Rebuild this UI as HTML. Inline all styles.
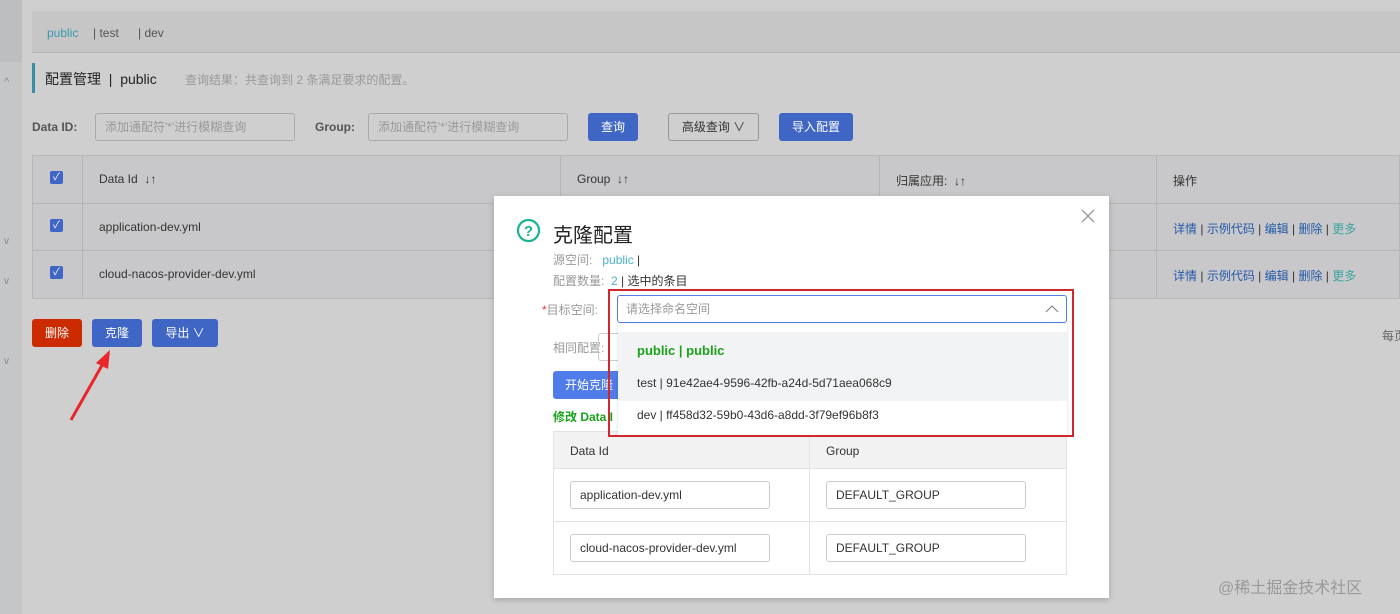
<!DOCTYPE html>
<html><head><meta charset="utf-8"><style>
*{box-sizing:border-box;margin:0;padding:0}
body{width:1400px;height:614px;overflow:hidden;background:#cfcfcf;font-family:"Liberation Sans","Noto Sans CJK SC",sans-serif;font-size:12px;color:#333;position:relative}
.a{position:absolute;white-space:nowrap}
.cb{position:absolute;width:13px;height:13px;background:#3f66c5;border-radius:2px;color:#fff;font-size:10px;line-height:13px;text-align:center}
.inp{position:absolute;border:1px solid #aaa;border-radius:3px;height:28px;color:#999;padding-left:9px;line-height:26px;font-size:12px;white-space:nowrap}
.btn{position:absolute;border-radius:3px;color:#fff;text-align:center;line-height:28px;height:28px;font-size:12px;white-space:nowrap}
.lk{color:#2359a8}
</style></head><body>
<div class="a" style="left:0;top:0;width:22px;height:614px;background:#c5c6c8"></div>
<div class="a" style="left:0;top:0;width:22px;height:62px;background:#bdbec0"></div>
<div class="a" style="left:4px;top:76px;color:#888;font-size:11px">^</div>
<div class="a" style="left:4px;top:236px;color:#888;font-size:10px">v</div>
<div class="a" style="left:4px;top:276px;color:#888;font-size:10px">v</div>
<div class="a" style="left:4px;top:356px;color:#888;font-size:10px">v</div>
<div class="a" style="left:32px;top:11px;width:1368px;height:42px;background:#c6c6c6;border-bottom:1px solid #b5b5b5"></div>
<div class="a" style="left:47px;top:26px;color:#3a9ab0">public</div>
<div class="a" style="left:93px;top:26px;color:#555">| test</div>
<div class="a" style="left:138px;top:26px;color:#555">| dev</div>
<div class="a" style="left:32px;top:63px;width:3px;height:30px;background:#3a8fa8"></div>
<div class="a" style="left:45px;top:69px;font-size:14px;color:#222">配置管理 &nbsp;| &nbsp;public</div>
<div class="a" style="left:185px;top:71px;color:#999">查询结果：共查询到 2 条满足要求的配置。</div>
<div class="a" style="left:32px;top:120px;font-weight:bold;color:#555">Data ID:</div>
<div class="inp" style="left:95px;top:113px;width:200px">添加通配符'*'进行模糊查询</div>
<div class="a" style="left:315px;top:120px;font-weight:bold;color:#555">Group:</div>
<div class="inp" style="left:368px;top:113px;width:200px">添加通配符'*'进行模糊查询</div>
<div class="btn" style="left:588px;top:113px;width:50px;background:#3f66c5">查询</div>
<div class="btn" style="left:668px;top:113px;width:91px;border:1px solid #999;color:#333;line-height:26px">高级查询 ∨</div>
<div class="btn" style="left:779px;top:113px;width:74px;background:#3f66c5">导入配置</div>
<div class="a" style="left:32px;top:155px;width:1368px;height:144px;background:#c8c8ca;border:1px solid #b8b8b8"></div>
<div class="a" style="left:32px;top:203px;width:1368px;height:1px;background:#b5b5b5"></div>
<div class="a" style="left:32px;top:250px;width:1368px;height:1px;background:#b5b5b5"></div>
<div class="a" style="left:82px;top:155px;width:1px;height:144px;background:#b5b5b5"></div>
<div class="a" style="left:560px;top:155px;width:1px;height:48px;background:#b5b5b5"></div>
<div class="a" style="left:879px;top:155px;width:1px;height:48px;background:#b5b5b5"></div>
<div class="a" style="left:1156px;top:155px;width:1px;height:144px;background:#b5b5b5"></div>
<div class="cb" style="left:50px;top:171px">✓</div>
<div class="cb" style="left:50px;top:219px">✓</div>
<div class="cb" style="left:50px;top:266px">✓</div>
<div class="a" style="left:99px;top:172px">Data Id &nbsp;↓↑</div>
<div class="a" style="left:577px;top:172px">Group &nbsp;↓↑</div>
<div class="a" style="left:896px;top:172px">归属应用: &nbsp;↓↑</div>
<div class="a" style="left:1173px;top:172px">操作</div>
<div class="a" style="left:99px;top:220px">application-dev.yml</div>
<div class="a" style="left:99px;top:267px">cloud-nacos-provider-dev.yml</div>
<div class="a" style="left:1173px;top:220px"><span class="lk">详情</span> | <span class="lk">示例代码</span> | <span class="lk">编辑</span> | <span class="lk">删除</span> | <span style="color:#3aa5a0">更多</span></div>
<div class="a" style="left:1173px;top:267px"><span class="lk">详情</span> | <span class="lk">示例代码</span> | <span class="lk">编辑</span> | <span class="lk">删除</span> | <span style="color:#3aa5a0">更多</span></div>
<div class="btn" style="left:32px;top:319px;width:50px;background:#cc2a00">删除</div>
<div class="btn" style="left:92px;top:319px;width:50px;background:#3f66c5">克隆</div>
<div class="btn" style="left:152px;top:319px;width:66px;background:#3f66c5">导出 ∨</div>
<div class="a" style="left:1382px;top:327px;color:#666">每页</div>
<svg class="a" style="left:60px;top:345px" width="60" height="80"><line x1="11" y1="75" x2="45" y2="15" stroke="#e8262c" stroke-width="3"/><polygon points="50,5 36,18 48,24" fill="#e8262c"/></svg>
<div class="a" style="left:1218px;top:574px;color:#999;font-size:16px">@稀土掘金技术社区</div>

<div class="a" style="left:494px;top:196px;width:615px;height:402px;background:#fff;box-shadow:0 2px 6px rgba(0,0,0,.2)"></div>
<svg class="a" style="left:1081px;top:209px" width="14" height="14"><path d="M1 1L13 13M13 1L1 13" stroke="#999" stroke-width="1.3"/></svg>
<svg class="a" style="left:516px;top:218px" width="25" height="25"><circle cx="12.5" cy="12.5" r="10.5" fill="none" stroke="#1ab394" stroke-width="2.2"/><text x="12.5" y="18" text-anchor="middle" font-size="15" font-weight="bold" fill="#1ab394" font-family="Liberation Sans">?</text></svg>
<div class="a" style="left:553px;top:219px;font-size:20px;color:#222">克隆配置</div>
<div class="a" style="left:553px;top:251px;color:#999">源空间: &nbsp;&nbsp;<span style="color:#4bb0cc">public</span> <span style="color:#333">|</span></div>
<div class="a" style="left:553px;top:272px;color:#999">配置数量: &nbsp;<span style="color:#4bb0cc">2</span> <span style="color:#333">| 选中的条目</span></div>
<div class="a" style="left:542px;top:301px;color:#999"><span style="color:#e33">*</span>目标空间:</div>
<div class="a" style="left:553px;top:339px;color:#999">相同配置:</div>
<div class="a" style="left:598px;top:333px;width:20px;height:28px;border:1px solid #ccc;border-right:none;border-radius:3px 0 0 3px"></div>
<div class="btn" style="left:553px;top:371px;width:70px;background:#4f7ce8;border-radius:3px 0 0 3px;text-align:left;padding-left:12px">开始克隆</div>
<div class="a" style="left:553px;top:408px;color:#1aa31a;font-weight:bold">修改 Data I</div>
<div class="a" style="left:553px;top:431px;width:514px;height:144px;border:1px solid #e3e3e3"></div>
<div class="a" style="left:553px;top:431px;width:514px;height:38px;background:#f2f2f2;border:1px solid #e3e3e3"></div>
<div class="a" style="left:553px;top:521px;width:514px;height:1px;background:#e3e3e3"></div>
<div class="a" style="left:809px;top:431px;width:1px;height:144px;background:#e3e3e3"></div>
<div class="a" style="left:570px;top:444px">Data Id</div>
<div class="a" style="left:826px;top:444px">Group</div>
<div class="inp" style="left:570px;top:481px;width:200px;color:#333;border-color:#ccc">application-dev.yml</div>
<div class="inp" style="left:826px;top:481px;width:200px;color:#333;border-color:#ccc">DEFAULT_GROUP</div>
<div class="inp" style="left:570px;top:534px;width:200px;color:#333;border-color:#ccc">cloud-nacos-provider-dev.yml</div>
<div class="inp" style="left:826px;top:534px;width:200px;color:#333;border-color:#ccc">DEFAULT_GROUP</div>

<div class="a" style="left:618px;top:324px;width:449px;height:111px;background:#fff;box-shadow:0 1px 3px rgba(0,0,0,.15)"></div>
<div class="a" style="left:618px;top:332px;width:449px;height:37px;background:#f2f3f4"></div>
<div class="a" style="left:618px;top:369px;width:449px;height:32px;background:#f2f3f4"></div>
<div class="a" style="left:637px;top:343px;color:#1aa31a;font-weight:bold;font-size:13px">public | public</div>
<div class="a" style="left:637px;top:376px">test | 91e42ae4-9596-42fb-a24d-5d71aea068c9</div>
<div class="a" style="left:637px;top:408px">dev | ff458d32-59b0-43d6-a8dd-3f79ef96b8f3</div>
<div class="a" style="left:617px;top:295px;width:450px;height:28px;border:1px solid #4f7ce8;border-radius:3px;padding-left:8px;line-height:26px;color:#999;background:#fff">请选择命名空间</div>
<svg class="a" style="left:1045px;top:304px" width="14" height="10"><path d="M1 8L7 2L13 8" fill="none" stroke="#888" stroke-width="1.2"/></svg>
<div class="a" style="left:608px;top:289px;width:466px;height:148px;border:2px solid #d0282e"></div>
</body></html>
